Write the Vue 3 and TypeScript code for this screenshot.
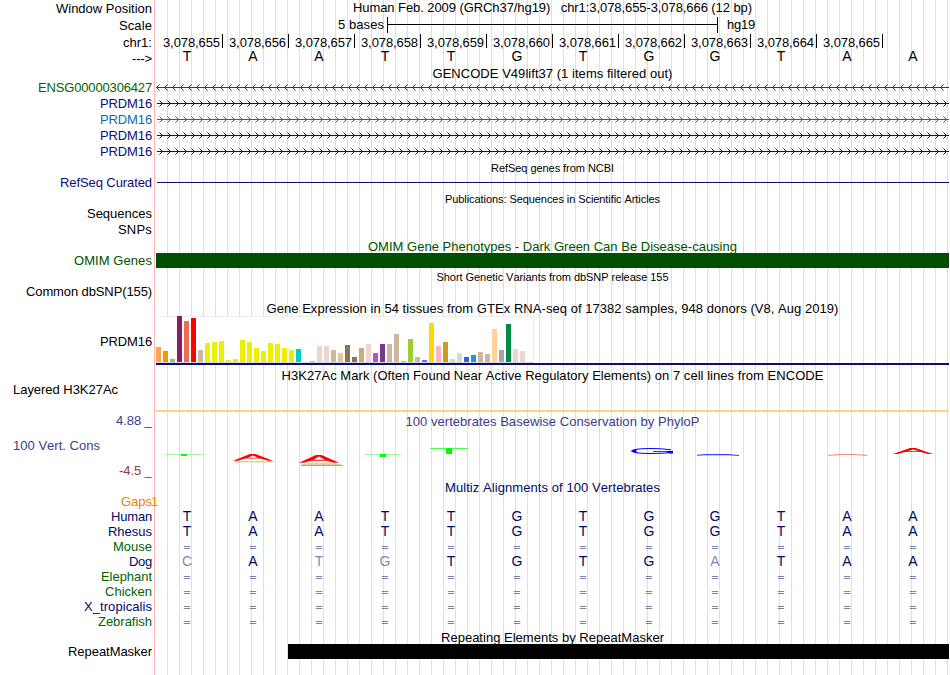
<script setup lang="ts">
interface Label { text: string; color?: string; height?: number; base?: number; left?: boolean }
interface Row {
  height: number
  labels?: Label[]
  title?: string
  small?: boolean
  base?: number
  color?: string
  kind?: 'scale' | 'ruler' | 'bases' | 'arrows' | 'line' | 'omim' | 'gtex' | 'phylop' | 'repeat' | 'gaps'
  dir?: 'left' | 'right'
  seq?: string
}

const NAVY = '#0c0c78'
const GREEN = '#006400'
const OMIM = '#005000'
const MULTIZ = '#000a64'
const PHYLOP = '#3c3c8c'

const ctx = document.createElement('canvas').getContext('2d')!

function measure(text: string, size: number): number {
  ctx.font = `${size}px "Liberation Sans"`
  ctx.fontKerning = 'none'
  return ctx.measureText(text).width
}

// Whole-pixel glyph advances, spread evenly as letter spacing
function spacing(text: string, size: number): string {
  let wanted = 0
  for (const ch of text) wanted += Math.round(measure(ch, size))
  return `${((wanted - measure(text, size)) / text.length).toFixed(4)}px`
}

function textStyle(text: string, base = 12, color = '#000', small = false) {
  return {
    color,
    lineHeight: `${2 * base - (small ? 8 : 9)}px`,
    letterSpacing: spacing(text, small ? 11 : 13),
  }
}

function gene(text: string, color: string, dir: 'left' | 'right' = 'right'): Row {
  return { height: 16, labels: [{ text, color }], kind: 'arrows', color, dir }
}

function species(text: string, seq: string, color = GREEN): Row {
  return { height: 15, labels: [{ text, color }], kind: 'bases', seq, color: MULTIZ }
}

const rows: Row[] = [
  { height: 17, labels: [{ text: 'Window Position', base: 13 }], title: 'Human Feb. 2009 (GRCh37/hg19)   chr1:3,078,655-3,078,666 (12 bp)', base: 12 },
  { height: 17, labels: [{ text: 'Scale', base: 13 }], kind: 'scale' },
  { height: 17, labels: [{ text: 'chr1:', base: 13 }], kind: 'ruler' },
  { height: 14, labels: [{ text: '--->', base: 12 }], kind: 'bases', seq: 'TAATTGTGGTAA', color: '#000', base: 10 },
  { height: 15, title: 'GENCODE V49lift37 (1 items filtered out)' },
  gene('ENSG00000306427', GREEN, 'left'),
  gene('PRDM16', NAVY),
  gene('PRDM16', '#0c6ea8'),
  gene('PRDM16', NAVY),
  gene('PRDM16', NAVY),
  { height: 15, title: 'RefSeq genes from NCBI', small: true, base: 12 },
  { height: 16, labels: [{ text: 'RefSeq Curated', color: NAVY }], kind: 'line' },
  { height: 15, title: 'Publications: Sequences in Scientific Articles', small: true, base: 12 },
  { height: 16, labels: [{ text: 'Sequences' }] },
  { height: 16, labels: [{ text: 'SNPs' }] },
  { height: 15, title: 'OMIM Gene Phenotypes - Dark Green Can Be Disease-causing', color: OMIM },
  { height: 15, labels: [{ text: 'OMIM Genes', color: OMIM }], kind: 'omim' },
  { height: 16, title: 'Short Genetic Variants from dbSNP release 155', small: true },
  { height: 16, labels: [{ text: 'Common dbSNP(155)' }] },
  { height: 16, title: 'Gene Expression in 54 tissues from GTEx RNA-seq of 17382 samples, 948 donors (V8, Aug 2019)' },
  { height: 49, labels: [{ text: 'PRDM16', base: 30 }], kind: 'gtex' },
  { height: 45, labels: [{ text: 'Layered H3K27Ac', base: 29, left: true }], title: 'H3K27Ac Mark (Often Found Near Active Regulatory Elements) on 7 cell lines from ENCODE', base: 15 },
  {
    height: 69,
    labels: [
      { text: '4.88 _', color: PHYLOP, base: 15, height: 25 },
      { text: '100 Vert. Cons', color: PHYLOP, base: 15, height: 25, left: true },
      { text: '-4.5 _', color: '#8c3c3c', base: 15, height: 19 },
    ],
    kind: 'phylop',
  },
  { height: 15, title: 'Multiz Alignments of 100 Vertebrates', color: MULTIZ },
  { height: 15, labels: [{ text: 'Gaps', color: '#e6820a' }], kind: 'gaps' },
  species('Human', 'TAATTGTGGTAA', MULTIZ),
  species('Rhesus', 'TAATTGTGGTAA', MULTIZ),
  species('Mouse', '============'),
  species('Dog', 'cAtgTGTGaTAA', MULTIZ),
  species('Elephant', '============'),
  species('Chicken', '============'),
  species('X_tropicalis', '============', MULTIZ),
  species('Zebrafish', '============'),
  { height: 15, title: 'Repeating Elements by RepeatMasker' },
  { height: 15, labels: [{ text: 'RepeatMasker' }], kind: 'repeat' },
]

const positions = Array.from({ length: 11 }, (_, i) => `3,078,${655 + i}`)

// Chevrons every 8px, stepped out one pixel at a time from the tip
function chevrons(dir: 'left' | 'right' | undefined, steps: number[]): string {
  let d = ''
  for (let i = 0; i < 99; i++) {
    for (const s of steps) {
      const x = dir === 'left' ? i * 8 + s : i * 8 + 6 - s
      d += `M${x} ${7 - s}h1v1h-1zM${x} ${7 + s}h1v1h-1z`
    }
  }
  return d
}

// [height, color] per tissue
const tissues: [number, string][] = [
  [15, '#ffa54f'], [11, '#ee9a00'], [3, '#8fbc8f'], [46, '#8b1c62'], [41, '#ee6a50'], [44, '#ff0000'],
  [12, '#cdb79e'], [19, '#eeee00'], [20, '#eeee00'], [21, '#eeee00'], [2, '#eeee00'], [3, '#eeee00'],
  [22, '#eeee00'], [20, '#eeee00'], [14, '#eeee00'], [11, '#eeee00'], [19, '#eeee00'], [18, '#eeee00'],
  [14, '#eeee00'], [12, '#eeee00'], [13, '#00cdcd'], [0, '#ee82ee'], [1, '#9ac0cd'], [16, '#eed5d2'],
  [16, '#eed5d2'], [12, '#cdb79e'], [9, '#eec591'], [17, '#8b7355'], [5, '#8b7355'], [14, '#cdaa7d'],
  [18, '#eed5d2'], [9, '#b452cd'], [18, '#7a378b'], [18, '#cdb79e'], [28, '#cdb79e'], [1, '#cdb79e'],
  [23, '#9acd32'], [5, '#cdb79e'], [2, '#7a67ee'], [39, '#ffd700'], [16, '#ffb6c1'], [20, '#cd9b1d'],
  [3, '#b4eeb4'], [9, '#d9d9d9'], [5, '#3a5fcd'], [7, '#1e90ff'], [10, '#cdb79e'], [8, '#cdb79e'],
  [33, '#ffd39b'], [12, '#a6a6a6'], [38, '#008b45'], [13, '#eed5d2'], [11, '#eed5d2'], [0, '#ff00ff'],
]
</script>

<template>
  <main class="browser">
    <div v-for="(row, i) in rows" :key="i" class="row" :style="{ height: `${row.height}px` }">
      <div class="labels">
        <div
          v-for="label in row.labels"
          :key="label.text"
          class="label"
          :class="{ 'label--left': label.left }"
          :style="{ height: label.height ? `${label.height}px` : undefined }"
        >
          <span :style="textStyle(label.text, label.base, label.color)">{{ label.text }}</span>
        </div>
      </div>

      <div class="track">
        <div v-if="row.title" class="title" :class="{ 'title--small': row.small }" :style="textStyle(row.title, row.base ?? 13, row.color, row.small)">{{ row.title }}</div>

        <div v-if="row.kind === 'scale'" class="scale">
          <span class="scale-text" :style="textStyle('5 bases', 12)">5 bases</span>
          <div class="scale-bar"><i /></div>
          <span class="scale-name" :style="textStyle('hg19', 12)">hg19</span>
        </div>

        <div v-else-if="row.kind === 'ruler'" class="ruler">
          <span v-for="p in positions" :key="p" class="pos" :style="textStyle(p, 13)">{{ p }}</span>
        </div>

        <div v-else-if="row.kind === 'bases'" class="bases">
          <span
            v-for="(b, n) in row.seq"
            :key="n"
            class="base"
            :class="{ 'base--diff': b !== b.toUpperCase(), 'base--gap': b === '=' }"
            :style="{ color: row.color, lineHeight: `${2 * (row.base ?? 12) - 10}px` }"
          >{{ b.toUpperCase() }}</span>
        </div>

        <svg v-else-if="row.kind === 'arrows'" width="793" height="16" viewBox="0 0 793 16" :fill="row.color" aria-hidden="true">
          <path :d="row.dir === 'left' ? 'M0 7h793v1H0z' : 'M1 7h792v1H1z'" />
          <path :d="chevrons(row.dir, [1, 2])" />
          <path :d="chevrons(row.dir, [3])" opacity="0.55" />
        </svg>

        <div v-else-if="row.kind === 'line'" class="refseq" />
        <div v-else-if="row.kind === 'omim'" class="omim" />

        <div v-else-if="row.kind === 'gtex'" class="gtex">
          <div class="bars">
            <i v-for="(t, n) in tissues" :key="n" class="bar" :style="{ height: `${t[0]}px`, background: t[1] }" />
          </div>
        </div>

        <template v-else-if="row.kind === 'phylop'">
          <div class="phylop">
            <div class="title" :style="textStyle('100 vertebrates Basewise Conservation by PhyloP', 12, PHYLOP)">100 vertebrates Basewise Conservation by PhyloP</div>
          </div>
          <svg width="793" height="48" viewBox="156 431 793 48" fill="none" aria-hidden="true">
            <!-- T -->
            <path d="M165.5 454.5H202.5M364.5 454.5H401.5" stroke="#a0f8a0" />
            <path d="M430 448.5H468" stroke="#50ff50" />
            <path d="M181 454h6v2h-6zM380 454h6v3h-6zM446 448h6v6h-6z" fill="#00ff00" />
            <!-- A below the axis -->
            <path d="M235 461.7H273.5" stroke="#d9d59c" stroke-width="1.6" />
            <path d="M233 460.8L250 454H255.5L273 460.8H268L260.5 458.6H245L238 460.8ZM247.5 457.8H258L253 455.6Z" fill="#ff0000" fill-rule="evenodd" />
            <path d="M302 464.6L309 462.6H330L340 464.6Z" fill="#deda9f" />
            <path d="M301 465.5H343" stroke="#8585b0" stroke-width="0.8" />
            <path d="M301 464.6H341" stroke="#cac795" stroke-width="0.8" />
            <path d="M299 462.8L316 455H321.5L339 462.8H334L326.5 460.7H311L304 462.8ZM313.5 459.8H325L319 456.6Z" fill="#ff0000" fill-rule="evenodd" />
            <!-- G -->
            <path d="M671 449.8Q662 448.5 651 448.5Q633 448.6 632 451Q633 453.5 651 453.5Q663 453.5 671 452.5" stroke="#0000ff" />
            <path d="M653 451.5H668" stroke="#0000ff" stroke-width="0.8" />
            <path d="M630 451L638 448.8L636 451L638 453.2Z M666 451H673V453.6H669Z" fill="#0000ff" />
            <path d="M697 455.3L706 454.6H728L739 455.5" stroke="#4040ff" stroke-width="1.1" />
            <!-- A above the axis -->
            <path d="M828 455.4L842 454.4H851L867 455.4" stroke="#ff6060" stroke-width="0.8" />
            <path d="M893 453.9L910 448H915.5L933 453.9H928L920.5 452H905L898 453.9ZM907.5 451.2H919L913 449.4Z" fill="#ff0000" fill-rule="evenodd" />
          </svg>
        </template>

        <div v-else-if="row.kind === 'repeat'" class="repeat" />
        <span v-else-if="row.kind === 'gaps'" class="gap-count">1</span>
      </div>
    </div>
  </main>
</template>

<style>
body {
  margin: 0;
  background: #ffffff;
}
</style>

<style scoped>
.browser {
  width: 950px;
  height: 675px;
  overflow: hidden;
  font-family: "Liberation Sans", Arial, sans-serif;
  font-size: 13px;
  font-kerning: none;
  font-variant-ligatures: none;
  background-color: #ffffff;
  background-image:
    linear-gradient(#ffb4b4, #ffb4b4),
    repeating-linear-gradient(to right, #dcdcf8 0 1px, transparent 1px 12px);
  background-size: 1px 100%, 783px 100%;
  background-position: 154px 0, 167px 0;
  background-repeat: no-repeat;
}

.row {
  display: flex;
}

.labels {
  width: 152px;
  margin-right: 4px;
  flex: none;
}

.label {
  display: flex;
  justify-content: flex-end;
  white-space: pre;
}
.label--left {
  justify-content: flex-start;
  padding-left: 13px;
}

.track {
  width: 793px;
  flex: none;
}
.track svg { display: block; }

.title {
  text-align: center;
  white-space: pre;
}
.title--small { font-size: 11px; }

.scale {
  display: flex;
  height: 17px;
}
.scale-text {
  width: 228px;
  margin-right: 3px;
  text-align: right;
}
.scale-bar {
  width: 329px;
  height: 16px;
  border-left: 1px solid #000000;
  border-right: 1px solid #000000;
}
.scale-bar i {
  display: block;
  height: 7px;
  border-bottom: 1px solid #000000;
}
.scale-name { margin-left: 9px; }

.ruler {
  display: flex;
  margin-left: 1px;
}
.pos {
  box-sizing: border-box;
  width: 66px;
  height: 14px;
  padding-right: 2px;
  border-right: 1px solid #000000;
  text-align: right;
}

.bases {
  display: flex;
  margin-left: -2px;
}
.base {
  width: 66px;
  flex: none;
  text-align: center;
  font-size: 14px;
}
.base--diff { opacity: 0.5; }
.base--gap {
  box-sizing: border-box;
  height: 15px;
  padding-top: 2px;
  font-family: "DejaVu Sans", sans-serif;
  font-size: 10px;
  opacity: 0.5;
}

.refseq {
  height: 7px;
  margin-left: 1px;
  border-bottom: 1px solid #0c0c78;
}
.omim {
  height: 15px;
  background: #005000;
}

.gtex {
  height: 47px;
  border-bottom: 2px solid #0c0c78;
}
.bars {
  display: flex;
  align-items: flex-end;
  gap: 2px;
  box-sizing: border-box;
  width: 378px;
  height: 47px;
  background: #ffffff;
  border-right: 1px solid #eeeeee;
  border-bottom: 1px solid #d8d8d8;
  box-shadow: inset 0 1px #eeeeee;
}
.bar {
  width: 5px;
  flex: none;
}

.phylop {
  box-sizing: border-box;
  height: 21px;
  border-top: 2px solid #ffd280;
}
.phylop .title { padding-top: 2px; }

.repeat {
  height: 15px;
  margin-left: 132px;
  background: #000000;
}

.gap-count {
  display: block;
  margin-left: -5px;
  line-height: 15px;
  color: #e6820a;
}
</style>
